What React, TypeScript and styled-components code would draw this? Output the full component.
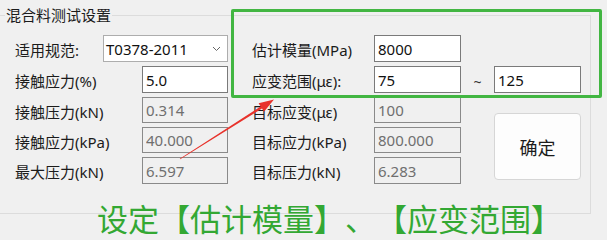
import React from 'react';
import styled, {createGlobalStyle} from 'styled-components';

const GlobalStyle = createGlobalStyle`
  html, body {
    margin: 0;
    padding: 0;
    background: #f0f0f0;
  }
  body {
    font-family: "Noto Sans", "Noto Sans CJK SC", sans-serif;
  }
`;

const Page = styled.div`
  position: relative;
  width: 607px;
  height: 240px;
  overflow: hidden;
  background: #f0f0f0;
  color: #1b1b1b;
`;

const GroupBox = styled.fieldset`
  box-sizing: border-box;
  width: 593px;
  height: 207px;
  margin: 7px 0 0 -2px;
  padding: 12px 0 0 16px;
  border: 1px solid #dcdcdc;
  border-radius: 0;
  min-width: 0;
`;

const GroupTitle = styled.legend`
  margin-left: -10px;
  padding: 0 1px;
  font-size: 15px;
  line-height: 16px;
  color: #1b1b1b;
`;

const Form = styled.div`
  display: grid;
  grid-template-columns: 88px 125px 24px 122px 87px 33px 87px;
  grid-template-rows: 27px 27px 26px 26px 27px;
  row-gap: 4px;
`;

const Label = styled.div<{$col: number}>`
  grid-column: ${p => p.$col};
  display: flex;
  align-items: center;
  padding-top: 2px;
  font-size: 15px;
  white-space: nowrap;
`;

const Field = styled.input<{$col: number; $muted?: boolean}>`
  grid-column: ${p => p.$col};
  justify-self: end;
  box-sizing: border-box;
  width: ${p => (p.$col === 2 ? 86 : 87)}px;
  height: 100%;
  margin: 0;
  padding: 0 3px;
  font-family: "Noto Sans", "Noto Sans CJK SC", sans-serif;
  font-size: 15px;
  color: ${p => (p.$muted ? '#6f6f6f' : '#111')};
  background: ${p => (p.$muted ? '#f0f0f0' : '#ffffff')};
  border: 1px solid ${p => (p.$muted ? '#8a8a8a' : '#7a7a7a')};
  border-radius: 0;
  outline: none;
`;

const Combo = styled.div`
  grid-column: 2;
  box-sizing: border-box;
  display: flex;
  align-items: center;
  justify-content: space-between;
  padding: 0 6px 0 2px;
  background: #ffffff;
  border: 1px solid #adadad;
  font-size: 15px;
  color: #111;
`;

const Tilde = styled.div`
  grid-column: 6;
  display: flex;
  align-items: center;
  justify-content: center;
  padding-top: 4px;
  font-size: 14px;
  color: #333;
`;

const OkButton = styled.button`
  grid-column: 7;
  grid-row: 3 / span 3;
  align-self: start;
  margin-top: 16px;
  width: 87px;
  height: 67px;
  background: #fdfdfd;
  border: 1px solid #d6d6d6;
  border-radius: 4px;
  font-family: "Noto Sans CJK SC", sans-serif;
  font-size: 18px;
  color: #1b1b1b;
  padding: 0;
`;

const Caption = styled.div`
  margin-top: -12px;
  padding-left: 97px;
  font-family: "Noto Sans CJK SC", sans-serif;
  font-size: 31px;
  line-height: 31px;
  color: #33a833;
  white-space: nowrap;
  text-spacing-trim: space-all;
  font-feature-settings: "halt" 0, "palt" 0;
`;

const Highlight = styled.div`
  position: absolute;
  left: 231px;
  top: 9px;
  width: 371px;
  height: 89px;
  box-sizing: border-box;
  border: 3px solid #42b642;
  border-radius: 2px;
  pointer-events: none;
`;

const ArrowLayer = styled.svg`
  position: absolute;
  left: 0;
  top: 0;
  pointer-events: none;
`;

function Chevron() {
  return (
    <svg width="9" height="6" viewBox="0 0 9 6">
      <path d="M1 1 L4.5 4.5 L8 1" fill="none" stroke="#666" strokeWidth="1" />
    </svg>
  );
}

const leftRows = [
  {label: '接触压力(kN)', value: '0.314'},
  {label: '接触应力(kPa)', value: '40.000'},
  {label: '最大压力(kN)', value: '6.597'},
];

const rightRows = [
  {label: '目标应变(με)', value: '100'},
  {label: '目标应力(kPa)', value: '800.000'},
  {label: '目标压力(kN)', value: '6.283'},
];

export default function App() {
  return (
    <>
      <GlobalStyle />
      <Page>
        <GroupBox>
          <GroupTitle>混合料测试设置</GroupTitle>
          <Form>
            <Label $col={1}>适用规范:</Label>
            <Combo>
              <span>T0378-2011</span>
              <Chevron />
            </Combo>
            <Label $col={4}>估计模量(MPa)</Label>
            <Field $col={5} defaultValue="8000" />

            <Label $col={1}>接触应力(%)</Label>
            <Field $col={2} defaultValue="5.0" />
            <Label $col={4}>应变范围(με):</Label>
            <Field $col={5} defaultValue="75" />
            <Tilde>~</Tilde>
            <Field $col={7} defaultValue="125" />

            {leftRows.map((row, i) => (
              <React.Fragment key={row.label}>
                <Label $col={1} style={{gridRow: i + 3}}>{row.label}</Label>
                <Field $col={2} $muted readOnly style={{gridRow: i + 3}} defaultValue={row.value} />
                <Label $col={4} style={{gridRow: i + 3}}>{rightRows[i].label}</Label>
                <Field $col={5} $muted readOnly style={{gridRow: i + 3}} defaultValue={rightRows[i].value} />
              </React.Fragment>
            ))}
            <OkButton>确定</OkButton>
          </Form>
        </GroupBox>
        <Caption>设定【估计模量】、【应变范围】</Caption>

        <Highlight />
        <ArrowLayer width="607" height="240" viewBox="0 0 607 240">
          <polygon
            points="179.8,158.7 260.6,106.4 258.6,103.3 274,99.5 264,111.7 262,108.6 180.2,159.3"
            fill="#e8322b"
          />
        </ArrowLayer>
      </Page>
    </>
  );
}
